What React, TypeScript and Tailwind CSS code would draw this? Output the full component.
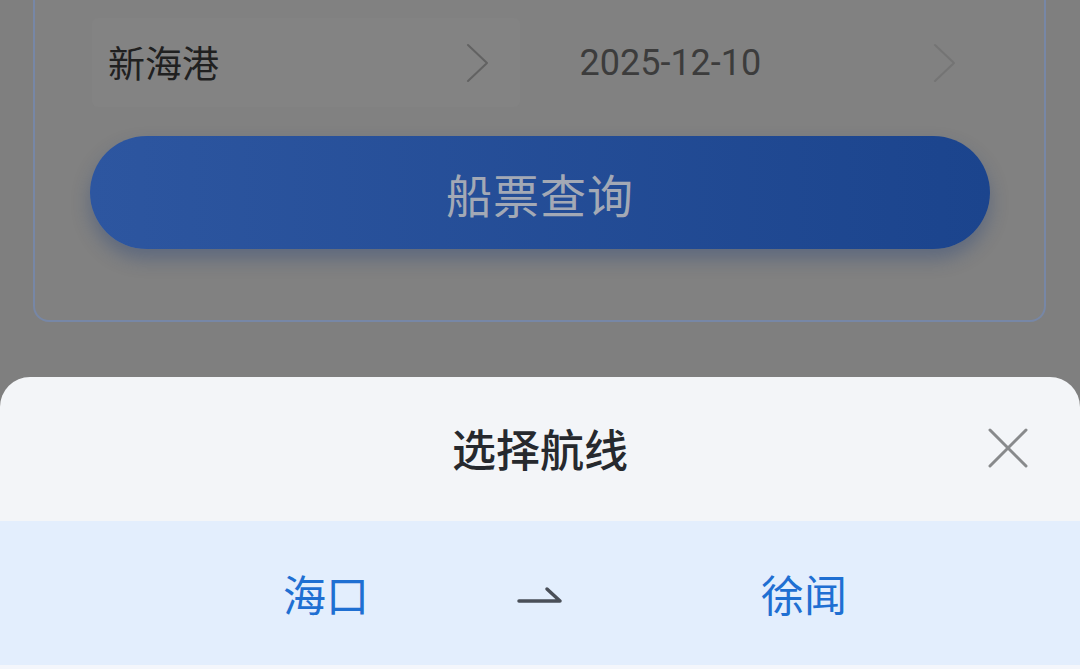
import React from 'react';

const font = { fontFamily: '"Noto Sans CJK SC", "Noto Sans", sans-serif' };

const Chevron: React.FC<{ color: string }> = ({ color }) => (
  <svg width="24" height="40" viewBox="0 0 24 40" fill="none">
    <polyline points="2,2 21,20 2,38" stroke={color} strokeWidth="2" strokeLinecap="round" strokeLinejoin="round" />
  </svg>
);

const App: React.FC = () => {
  return (
    <div className="w-[1080px] h-[669px] overflow-hidden bg-[#7f7f7f] flex flex-col" style={font}>
      {/* search card, dimmed by the overlay */}
      <div className="ml-[33px] w-[1013px] h-[322px] bg-[#818181] border-x-2 border-b-2 border-[#7787a6] rounded-b-[16px] pt-[18px] px-[57px] shrink-0">
        <div className="flex gap-[40px]">
          <div className="w-[428px] h-[89px] bg-[#838383] rounded-[6px] flex items-center justify-between pl-[16px] pr-[30px]">
            <span className="text-[37px] text-[#202020] leading-none">新海港</span>
            <Chevron color="#626262" />
          </div>
          <div className="w-[428px] h-[89px] flex items-center justify-between pl-[20px] pr-[30px]">
            <span className="text-[36px] text-[#3c3c3c] leading-none" style={{ fontFamily: 'Roboto, "Noto Sans", sans-serif' }}>2025-12-10</span>
            <Chevron color="#747474" />
          </div>
        </div>
        <button className="mt-[29px] -ml-[2px] w-[900px] h-[113px] rounded-full bg-gradient-to-r from-[#2d56a0] to-[#1b448d] shadow-[0_10px_18px_rgba(30,60,120,0.35)] flex items-center justify-center">
          <span className="text-[46px] text-[#a3a9b5] tracking-[1px] leading-none">船票查询</span>
        </button>
      </div>

      <div className="flex-1" />

      {/* bottom sheet */}
      <div className="h-[292px] shrink-0 bg-[#f3f5f8] rounded-t-[30px] flex flex-col overflow-hidden">
        <div className="h-[144px] relative flex items-center justify-center">
          <span className="text-[44px] font-medium text-[#26292e] leading-none -mt-[2px]">选择航线</span>
          <button className="absolute right-[52px] top-[51px]">
            <svg width="40" height="40" viewBox="0 0 40 40" fill="none">
              <line x1="2" y1="2" x2="38" y2="38" stroke="#888a8c" strokeWidth="3" strokeLinecap="round" />
              <line x1="38" y1="2" x2="2" y2="38" stroke="#888a8c" strokeWidth="3" strokeLinecap="round" />
            </svg>
          </button>
        </div>
        <div className="h-[144px] bg-[#e3eefd] flex items-center pl-[283px]">
          <span className="text-[43px] text-[#1f6fd2] leading-none">海口</span>
          <svg className="ml-[148px] mt-[2px]" width="46" height="20" viewBox="0 0 46 20" fill="none">
            <polyline points="2,17 43,17 30,5" stroke="#4a4f58" strokeWidth="3.5" strokeLinecap="round" strokeLinejoin="round" />
          </svg>
          <span className="ml-[198px] text-[43px] text-[#1f6fd2] leading-none">徐闻</span>
        </div>
        <div className="flex-1 bg-[#f4f6fb]" />
      </div>
    </div>
  );
};

export default App;
